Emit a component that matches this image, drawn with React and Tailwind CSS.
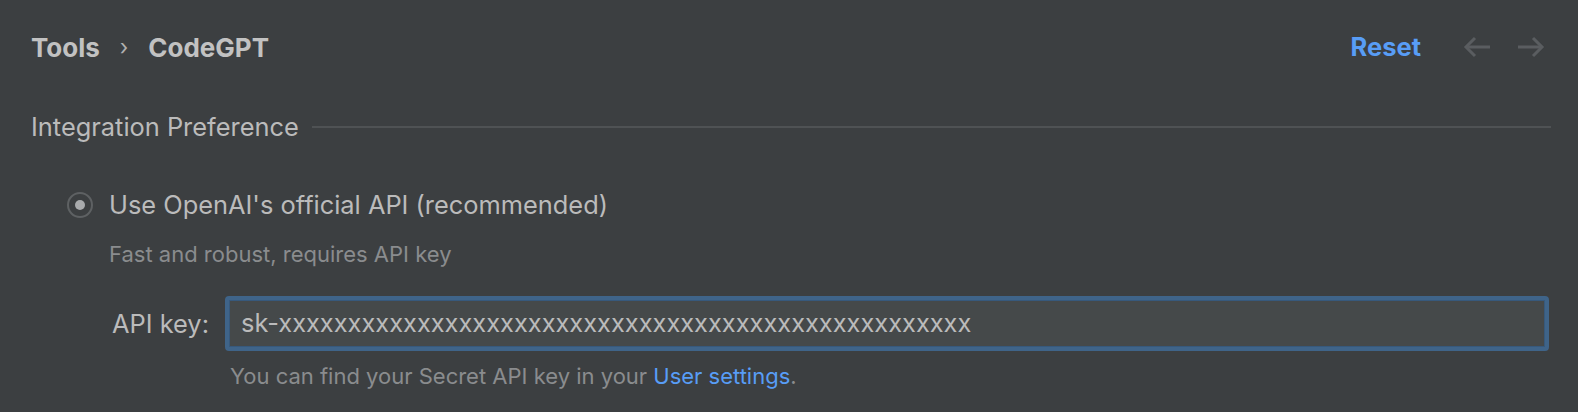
const ArrowLeft = () => (
  <svg width="28" height="22" viewBox="0 0 28 22" fill="none" stroke="#5a5d60" strokeWidth="3" strokeLinecap="butt" strokeLinejoin="miter">
    <path d="M27 11H3" />
    <path d="M12 2L3 11l9 9" />
  </svg>
);

const ArrowRight = () => (
  <svg width="28" height="22" viewBox="0 0 28 22" fill="none" stroke="#5a5d60" strokeWidth="3" strokeLinecap="butt" strokeLinejoin="miter">
    <path d="M1 11h24" />
    <path d="M16 2l9 9-9 9" />
  </svg>
);

const App = () => {
  const key = 'sk-' + 'x'.repeat(50);

  return (
    <div className="w-[1578px] h-[412px] overflow-hidden bg-[#3c3f41] text-[#bbbbbb] font-['Inter',sans-serif]">
      <div className="flex items-center justify-between h-[94px] pl-[31px] pr-[33px]">
        <div className="flex items-center text-[26px] font-bold text-[#c2c2c2]">
          <span>Tools</span>
          <span className="mx-[20px] text-[22px] font-normal text-[#b0b0b0]">›</span>
          <span>CodeGPT</span>
        </div>
        <div className="flex items-center">
          <span className="text-[25.5px] font-bold text-[#589df6]">Reset</span>
          <div className="ml-[42px] flex items-center gap-[26px]">
            <ArrowLeft />
            <ArrowRight />
          </div>
        </div>
      </div>

      <div className="mt-[17px] flex items-center h-[32px] pl-[31px] pr-[27px]">
        <span className="text-[25.4px] leading-[32px]">Integration Preference</span>
        <div className="ml-[13px] flex-1 h-[2px] bg-[#4f5254]" />
      </div>

      <div className="mt-[46px] flex items-center h-[32px] pl-[67px]">
        <div className="w-[26px] h-[26px] rounded-full border-2 border-[#5e6163] flex items-center justify-center">
          <div className="w-[10px] h-[10px] rounded-full bg-[#a9abad]" />
        </div>
        <span className="ml-[16px] text-[25.4px] leading-[32px]">Use OpenAI's official API (recommended)</span>
      </div>

      <div className="mt-[19px] pl-[109px] h-[28px] text-[22px] leading-[28px] text-[#8a8c8e]">
        Fast and robust, requires API key
      </div>

      <div className="mt-[28px] flex items-center pl-[112px] pr-[29px]">
        <span className="text-[25.4px] leading-[32px] w-[113px] shrink-0">API key:</span>
        <div className="flex-1 h-[55px] rounded-[4px] border-[4px] border-[#3f6489]">
          <div className="h-full border border-[#37597c] bg-[#45494a] flex items-center pl-[11px] text-[25.4px] text-[#bbbbbb]">
            {key}
          </div>
        </div>
      </div>

      <div className="mt-[11px] pl-[230px] h-[28px] text-[22px] leading-[28px] text-[#8a8c8e]">
        You can find your Secret API key in your <span className="text-[#589df6]">User settings</span>.
      </div>
    </div>
  );
};

export default App;
